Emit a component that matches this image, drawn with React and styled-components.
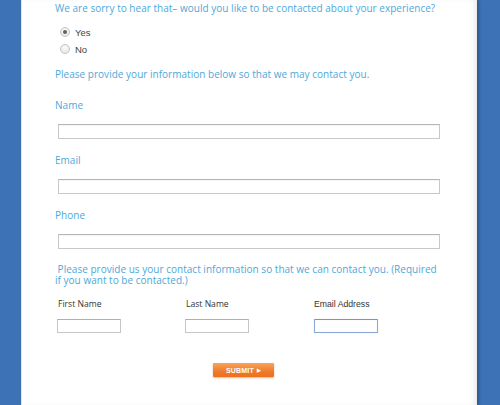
import React from "react";
import styled, { createGlobalStyle } from "styled-components";

const Global = createGlobalStyle`
  html, body { margin: 0; padding: 0; }
  body { background: #3d72b6; width: 500px; height: 405px; overflow: hidden; }
`;

const Page = styled.div`
  display: flex;
  height: 405px;
  padding-left: 21px;
  box-sizing: border-box;
`;

const Panel = styled.div`
  width: 456px;
  height: 405px;
  background: #ffffff;
  border-left: 1px solid #e4e6ea;
  box-shadow: inset -5px 0 6px -3px rgba(0, 0, 0, 0.1), 2px 0 3px rgba(0, 0, 0, 0.25);
  box-sizing: border-box;
  padding: 1px 0 0 33px;
`;

const Blue = styled.div`
  font-family: "Open Sans", "DejaVu Sans", sans-serif;
  font-size: 10px;
  line-height: ${(p) => p.$lh || 14}px;
  color: #4ea8d9;
  margin-top: ${(p) => p.$mt || 0}px;
  letter-spacing: 0.02px;
  white-space: nowrap;
`;

const RadioGroup = styled.div`
  display: flex;
  flex-direction: column;
  gap: 3px;
  margin-top: 10px;
  padding-left: 5px;
`;

const RadioRow = styled.label`
  display: flex;
  align-items: center;
  height: 14px;
  gap: 5px;
  font-family: "Liberation Sans", Arial, sans-serif;
  font-size: 9.5px;
  color: #444;
`;

const Dot = styled.span`
  width: 8px;
  height: 8px;
  border-radius: 50%;
  border: 1px solid #c4c4c4;
  background: radial-gradient(circle at 50% 35%, #fdfdfd, #e0e0e0);
  display: flex;
  align-items: center;
  justify-content: center;
  &::after {
    content: "";
    width: 4px;
    height: 4px;
    border-radius: 50%;
    background: ${(p) => (p.$on ? "#606060" : "transparent")};
  }
`;

const WideInput = styled.div`
  width: 382px;
  height: 15px;
  margin-top: ${(p) => p.$mt || 12}px;
  margin-left: 3px;
  box-sizing: border-box;
  border: 1px solid #c9c9c9;
  border-top-color: #b4b4b4;
  box-shadow: inset 0 1px 1px rgba(0, 0, 0, 0.04);
  background: #fff;
`;

const Para = styled(Blue)`
  white-space: normal;
  width: 384px;
`;

const Grid = styled.div`
  display: grid;
  grid-template-columns: 128px 129px 128px;
  margin-top: 11px;
  padding-left: 2px;
`;

const Field = styled.div`
  display: flex;
  flex-direction: column;
  gap: 8px;
`;

const SmallLabel = styled.div`
  font-family: ${(p) => (p.$arial ? '"Liberation Sans", Arial' : '"Open Sans", "DejaVu Sans"')}, sans-serif;
  font-size: ${(p) => (p.$arial ? 8.7 : 8.6)}px;
  line-height: 14px;
  color: #333;
  padding-left: ${(p) => (p.$arial ? 0 : 1)}px;
`;

const SmallInput = styled.div`
  width: 64px;
  height: 14px;
  box-sizing: border-box;
  border: 1px solid ${(p) => (p.$focus ? "#8aa8d6" : "#c6c6c6")};
  border-top-color: ${(p) => (p.$focus ? "#7396cc" : "#b0b0b0")};
  box-shadow: ${(p) => (p.$focus ? "0 0 1px #b4cbee, inset 0 0 1px #d2e0f4" : "none")};
  background: #fff;
  ${(p) => (p.$focus ? "border-radius: 1px;" : "")}
`;

const SubmitRow = styled.div`
  display: flex;
  margin-top: 30px;
  padding-left: 158px;
`;

const Submit = styled.button`
  width: 61px;
  height: 14px;
  padding: 0;
  border: none;
  border-radius: 1px;
  background: linear-gradient(#f8a45a, #ef7a2a 60%, #ec6f1e);
  box-shadow: 0 1px 2px rgba(160, 80, 20, 0.4);
  color: #fff;
  font-family: "Liberation Sans", Arial, sans-serif;
  font-weight: bold;
  font-size: 7px;
  letter-spacing: 0.2px;
  display: flex;
  align-items: center;
  justify-content: center;
  gap: 3px;
`;

const Arrow = styled.span`
  font-size: 5px;
`;

export default function App() {
  return (
    <>
      <Global />
      <Page>
        <Panel>
          <Blue>We are sorry to hear that– would you like to be contacted about your experience?</Blue>
          <RadioGroup>
            <RadioRow><Dot $on />Yes</RadioRow>
            <RadioRow><Dot />No</RadioRow>
          </RadioGroup>
          <Blue $mt={11}>Please provide your information below so that we may contact you.</Blue>
          <Blue $mt={17}>Name</Blue>
          <WideInput />
          <Blue $mt={14}>Email</Blue>
          <WideInput />
          <Blue $mt={14}>Phone</Blue>
          <WideInput />
          <Para $mt={15} $lh={11}>
            &nbsp;Please provide us your contact information so that we can contact you. (Required if you want to be contacted.)
          </Para>
          <Grid>
            <Field>
              <SmallLabel>First Name</SmallLabel>
              <SmallInput />
            </Field>
            <Field>
              <SmallLabel>Last Name</SmallLabel>
              <SmallInput />
            </Field>
            <Field>
              <SmallLabel $arial>Email Address</SmallLabel>
              <SmallInput $focus />
            </Field>
          </Grid>
          <SubmitRow>
            <Submit>SUBMIT <Arrow>▶</Arrow></Submit>
          </SubmitRow>
        </Panel>
      </Page>
    </>
  );
}
